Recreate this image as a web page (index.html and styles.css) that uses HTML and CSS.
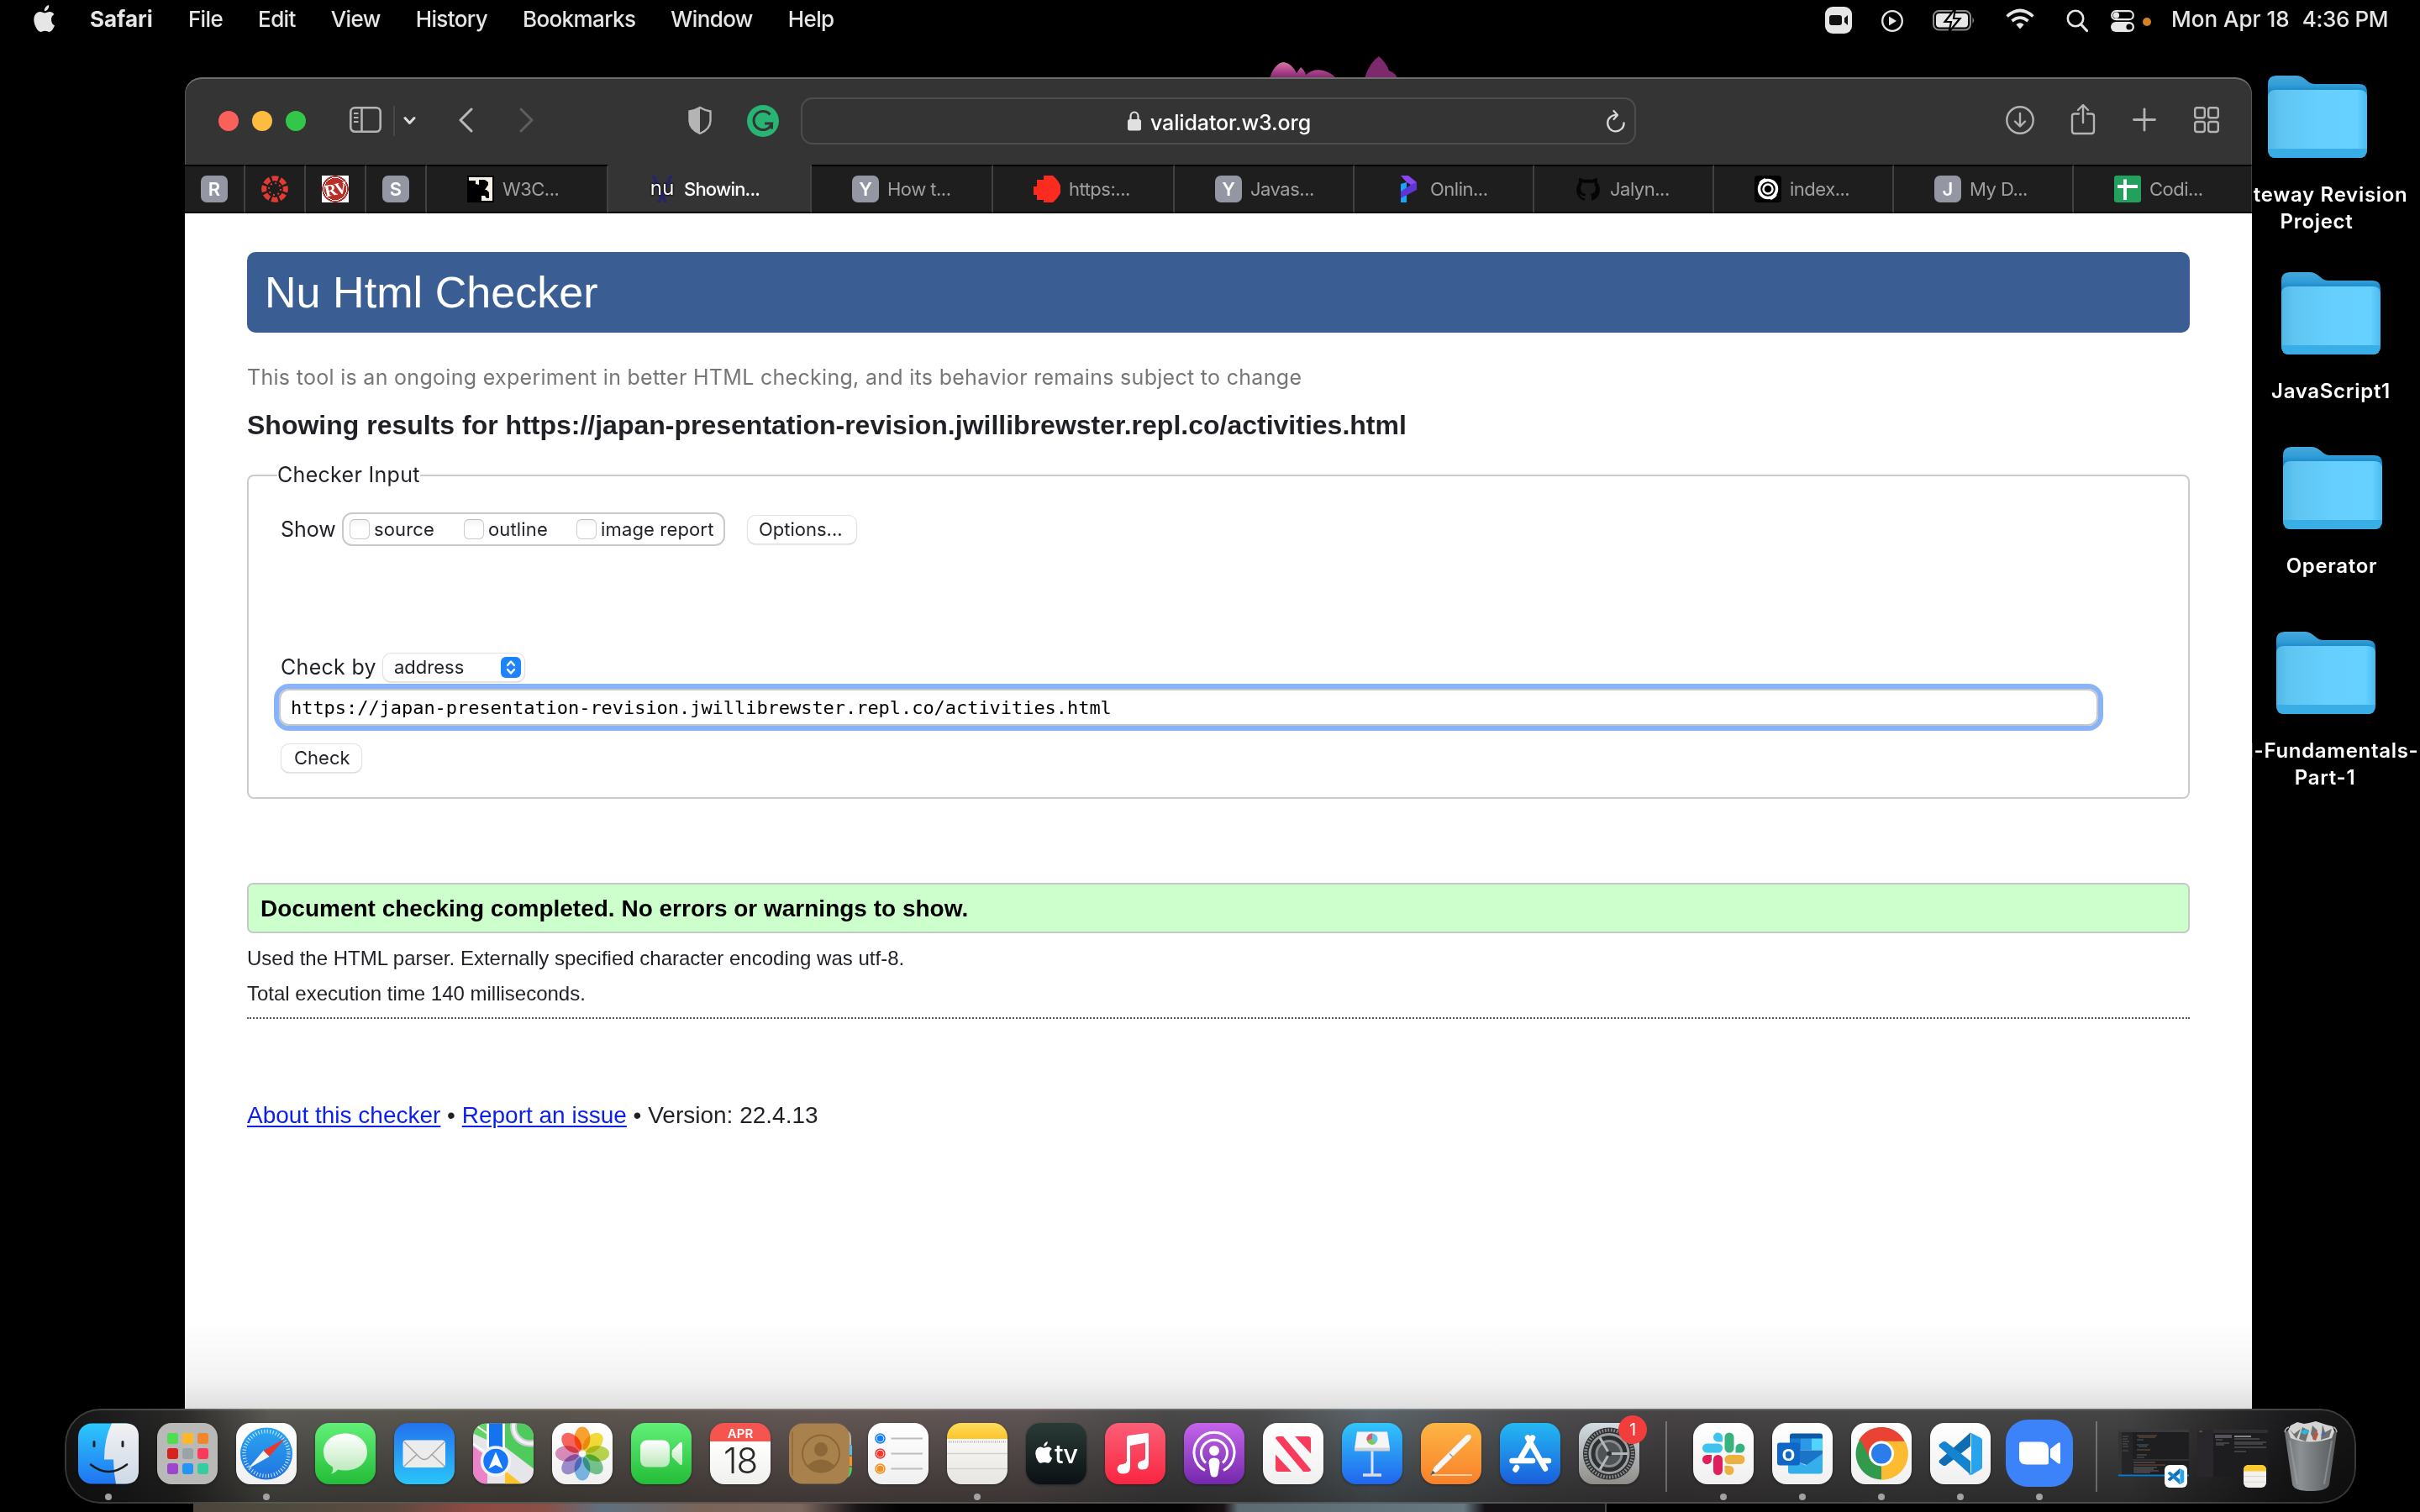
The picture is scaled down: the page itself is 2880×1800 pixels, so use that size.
FILE: index.html
```html
<!DOCTYPE html>
<html lang="en">
<head>
<meta charset="utf-8">
<title>Showing results - Nu Html Checker</title>
<link rel="stylesheet" href="styles.css">
</head>
<body>
<svg class="defs" width="0" height="0">
  <defs>
    <linearGradient id="fBack" x1="0" y1="0" x2="0" y2="1"><stop offset="0" stop-color="#46a9dc"/><stop offset=".2" stop-color="#2f9bd6"/><stop offset=".35" stop-color="#1180c4"/></linearGradient>
    <linearGradient id="fFront" x1="0" y1="0" x2="1" y2="0"><stop offset="0" stop-color="#4fb8e8"/><stop offset=".12" stop-color="#5fc4f0"/><stop offset=".5" stop-color="#66cffe"/><stop offset=".9" stop-color="#66d0ff"/><stop offset="1" stop-color="#48bbf0"/></linearGradient>
    <linearGradient id="gWhite" x1="0" y1="0" x2="0" y2="1"><stop offset="0" stop-color="#fff"/><stop offset="1" stop-color="#b9e8b9"/></linearGradient>
    <linearGradient id="gBlue" x1="0" y1="0" x2="0" y2="1"><stop offset="0" stop-color="#2dc8fb"/><stop offset="1" stop-color="#1f74f2"/></linearGradient>
    <linearGradient id="gFace" x1="0" y1="0" x2="0" y2="1"><stop offset="0" stop-color="#f1f1f4"/><stop offset="1" stop-color="#cdd9e6"/></linearGradient>
    <linearGradient id="gNeedle" x1="0" y1="0" x2="0" y2="1"><stop offset="0" stop-color="#2aa6f0"/><stop offset="1" stop-color="#2173e0"/></linearGradient>
    <linearGradient id="gBin" x1="0" y1="0" x2="1" y2="0"><stop offset="0" stop-color="#6a6e71"/><stop offset=".3" stop-color="#8d9194"/><stop offset=".6" stop-color="#73777a"/><stop offset="1" stop-color="#575b5e"/></linearGradient>
    <linearGradient id="gPetal" x1="0" y1="0" x2="0" y2="1"><stop offset="0" stop-color="#d976a4"/><stop offset=".6" stop-color="#a8408a"/><stop offset="1" stop-color="#7e2a6a"/></linearGradient>
    <symbol id="folder" viewBox="0 0 118 98">
      <path d="M0 10Q0 0 10 0H34Q39 0 44 4L49 8Q52 10 56 10H108Q118 10 118 19V60H0z" fill="url(#fBack)"/>
      <path d="M0 24Q1 17 9 17H109Q117 17 118 24V88Q118 98 108 98H10Q0 98 0 88z" fill="url(#fFront)"/>
      <path d="M0 88V87H118V88Q118 98 108 98H10Q0 98 0 88z" fill="#39ade6"/>
    </symbol>
    <symbol id="apple" viewBox="0 0 26 32">
      <path d="M18.2 0Q18.6 3 16.7 5.200Q15 7.400 12.800 7.200Q12.500 4.500 14.300 2.400Q16 .400 18.200 0zM25 24.500Q23.800 27.300 22.500 29.200Q20.700 31.800 18.600 31.900Q17.500 31.900 16.200 31.300Q14.900 30.700 13.500 30.700Q12.100 30.700 10.700 31.300Q9.400 31.900 8.500 31.900Q6.300 32 4.300 29.200Q.4 23.500 .3 17.600Q.3 12.800 3 10.100Q5 8.100 7.700 8.100Q9.100 8.100 10.800 8.800Q12.600 9.500 13.300 9.500Q13.900 9.500 15.900 8.700Q17.800 8 19.300 8.100Q22.500 8.300 24.500 11Q21 13.200 21 17Q21 22.300 25 24.500z" fill="currentColor"/>
    </symbol>
    <symbol id="vscode" viewBox="0 0 72 72">
      <path d="M48 11L11 44Q10 46 11 47L15 50Q17 51 19 50L48 27z" fill="#0f6db3"/>
      <path d="M48 61L11 28Q10 26 11 25L15 22Q17 21 19 22L48 45z" fill="#1484d0"/>
      <path d="M46 11Q48 11 50 12L60 17Q62 18 62 20V52Q62 54 60 55L50 61Q47 62 45 60Q49 61 49 57V15Q49 11 46 11z" fill="#2aa3ef"/>
    </symbol>
  </defs>
</svg>

<header class="menubar">
  <svg class="menubar-apple" width="26" height="32"><use href="#apple"/></svg>
  <nav class="menus"><b>Safari</b><span>File</span><span>Edit</span><span>View</span><span>History</span><span>Bookmarks</span><span>Window</span><span>Help</span></nav>
  <div class="status">
    <svg width="32" height="40"><rect y="8" width="32" height="32" rx="9" fill="#e6e6e6"/><rect x="5" y="18" width="15" height="12" rx="3" fill="#111"/><path d="M27 18v12l-4-3.500v-5z" fill="#111"/></svg>
    <svg class="s-play" width="26" height="40"><circle cx="13" cy="25" r="11.800" fill="none" stroke="#e6e6e6" stroke-width="2.300"/><path d="M9 19.500v11l9-5.500z" fill="#e6e6e6"/></svg>
    <svg class="s-bat" width="50" height="40"><rect x="1" y="13" width="44" height="22.500" rx="6.500" fill="none" stroke="#8a8a8a" stroke-width="2"/><rect x="4" y="16" width="38" height="16.500" rx="4" fill="#e6e6e6"/><path d="M47.500 20.500q3 3.500 0 7.500z" fill="#8a8a8a"/><path d="M27 10L14.500 26H22L19.500 38L32.500 22H25z" fill="#e6e6e6" stroke="#000" stroke-width="2.200"/></svg>
    <svg class="s-wifi" width="34" height="40" fill="none" stroke="#e6e6e6" stroke-width="3.600"><path d="M1.500 19.500Q17 5.500 32.500 19.500M7.500 25Q17 17 26.500 25"/><path d="M17 34.500l-4.600-5.300q4.600-3.800 9.200 0z" fill="#e6e6e6" stroke="none"/></svg>
    <svg class="s-search" width="26" height="40" fill="none" stroke="#e6e6e6" stroke-width="2.600"><circle cx="11" cy="22" r="9.200"/><path d="M17.500 29l7 7.500" stroke-width="3.200" stroke-linecap="round"/></svg>
    <svg class="s-cc" width="28" height="40"><rect x="1.200" y="13.200" width="25.600" height="10" rx="5" fill="none" stroke="#e6e6e6" stroke-width="2.200"/><circle cx="6.500" cy="18.200" r="3.600" fill="#e6e6e6"/><rect y="26" width="28" height="12" rx="6" fill="#e6e6e6"/><circle cx="22" cy="32" r="3.600" fill="#000"/></svg>
    <i class="mic"></i>
    <span class="clock"><span>Mon Apr 18</span><span>4:36 PM</span></span>
  </div>
</header>

<svg class="lotus" width="160" height="26"><path d="M0 26Q6 8 17 7Q27 9 32 20L37 13Q42 17 43 22Q52 14 64 17Q74 20 79 26z" fill="url(#gPetal)"/><path d="M113 26Q119 7 130 0Q139 8 142 17Q150 20 152 26z" fill="#7c2a6c"/></svg>
<div class="wallwin"></div>

<section class="folder f1"><svg width="118" height="98"><use href="#folder"/></svg><p>Gateway Revision<br>Project</p></section>
<section class="folder f2"><svg width="118" height="98"><use href="#folder"/></svg><p>JavaScript1</p></section>
<section class="folder f3"><svg width="118" height="98"><use href="#folder"/></svg><p>Operator</p></section>
<section class="folder f4"><svg width="118" height="98"><use href="#folder"/></svg><p><span>l-Fundamentals-</span><br>Part-1</p></section>

<div class="window">
  <div class="toolbar">
    <div class="lights"><i class="red"></i><i class="yellow"></i><i class="green"></i></div>
    <svg class="t-side" width="38" height="40" fill="none" stroke="#b4b4b4" stroke-width="2.600"><rect x="1.300" y="4.300" width="35.400" height="28.400" rx="5"/><path d="M14.500 4v29"/><path d="M5 11h5.500M5 16h5.500M5 21h5.500" stroke-width="2"/></svg>
    <i class="t-sep"></i>
    <svg class="t-chev" width="15" height="40" fill="none" stroke="#dcdcdc" stroke-width="3" stroke-linecap="round" stroke-linejoin="round"><path d="M2 16.500l5.500 6 5.500-6"/></svg>
    <svg class="t-back" width="17" height="40" fill="none" stroke="#b8b8b8" stroke-width="3" stroke-linecap="round" stroke-linejoin="round"><path d="M15 6L2 19l13 13"/></svg>
    <svg class="t-fwd" width="17" height="40" fill="none" stroke="#5e5e5e" stroke-width="3" stroke-linecap="round" stroke-linejoin="round"><path d="M2 6l13 13L2 32"/></svg>
    <svg class="t-shield" width="28" height="40"><path d="M14 4Q20 7.500 26.500 8.500V20Q26 30 14 35Q2 30 1.500 20V8.500Q8 7.500 14 4z" fill="none" stroke="#b4b4b4" stroke-width="2.400"/><path d="M14 3.500Q7 7.500 1 8V20Q2 30 14 35.500z" fill="#b4b4b4"/></svg>
    <svg class="t-gram" width="38" height="40"><circle cx="19" cy="20" r="19" fill="#28b473"/><path d="M27.500 12.500A11 11 0 1 0 29.500 23H21M29.500 23V29.500" fill="none" stroke="#343434" stroke-width="3"/></svg>
    <div class="url">
      <svg width="16" height="24"><rect y="10" width="16" height="13.500" rx="2.500" fill="#e0e0e0"/><path d="M3.500 11V6.500a4.500 5 0 0 1 9 0V11" fill="none" stroke="#e0e0e0" stroke-width="2.200"/></svg>
      <span>validator.w3.org</span>
      <svg class="reload" width="24" height="28" fill="none" stroke="#d8d8d8" stroke-width="2.300" stroke-linecap="round" stroke-linejoin="round"><path d="M13 7A9.700 9.700 0 1 0 21.600 16.500M9.500 2L14 7L9.500 12"/></svg>
    </div>
    <svg class="t-down" width="34" height="40" fill="none" stroke="#b4b4b4" stroke-width="2.400" stroke-linecap="round" stroke-linejoin="round"><circle cx="17" cy="19" r="15.700"/><path d="M17 11v15M11 20.500l6 6 6-6"/></svg>
    <svg class="t-share" width="30" height="40" fill="none" stroke="#b4b4b4" stroke-width="2.400" stroke-linecap="round" stroke-linejoin="round"><path d="M10 11.500H5Q2 11.500 2 14.500V31.500Q2 35 5 35H25Q28 35 28 31.500V14.500Q28 11.500 25 11.500H20M15 22V1.500M9 7l6-6 6 6"/></svg>
    <svg class="t-plus" width="28" height="40" fill="none" stroke="#b4b4b4" stroke-width="2.800" stroke-linecap="round"><path d="M14 6v25M1.500 18.500h25"/></svg>
    <svg class="t-grid" width="30" height="40" fill="none" stroke="#b4b4b4" stroke-width="2.400"><rect x="1.200" y="4.200" width="11.600" height="12" rx="2.500"/><rect x="17.200" y="4.200" width="11.600" height="12" rx="2.500"/><rect x="1.200" y="21" width="11.600" height="12" rx="2.500"/><rect x="17.200" y="21" width="11.600" height="12" rx="2.500"/></svg>
  </div>
  <div class="tabs">
    <div class="tab"><i class="letter">R</i></div>
    <div class="tab"><svg width="32" height="32" viewBox="-16 -16 32 32"><circle r="12.800" fill="none" stroke="#e23b34" stroke-width="6" stroke-dasharray="7.500 2.550" stroke-dashoffset="3.750"/><circle r="7" fill="none" stroke="#e23b34" stroke-width="2" stroke-dasharray="2 3.500"/></svg></div>
    <div class="tab"><i class="rv"><b>RV</b></i></div>
    <div class="tab"><i class="letter">S</i></div>
    <div class="tab"><svg width="32" height="32"><path d="M0 0h32v32H0z" fill="#000"/><path d="M2 2H30V30H17V24H21L23 27H26V20L23 17H21L25 11V8L21 5H14V11L10 10V6H2z" fill="#f5f1e6"/></svg><span>W3C...</span></div>
    <div class="tab active"><i class="nu">nu</i><span>Showin...</span></div>
    <div class="tab"><i class="letter">Y</i><span>How t...</span></div>
    <div class="tab"><svg width="32" height="32"><path d="M12 0H23L27 4L30 8L32 12V21L28 27L23 32H12V29H4V23H0V13H4V5H12z" fill="#fb2c1f"/></svg><span>https:...</span></div>
    <div class="tab"><i class="letter">Y</i><span>Javas...</span></div>
    <div class="tab"><svg width="32" height="32"><path d="M7 10L14 8V32H7z" fill="#1ba4f4"/><path d="M7 0H16L26 8V15L14 8z" fill="#8a46f5"/><path d="M26 8V17L7 27V19L19 11z" fill="#5b35d6"/></svg><span>Onlin...</span></div>
    <div class="tab"><svg width="32" height="32"><path d="M12 30Q2 27 2 16.500Q2 12 5 8.500V3Q8 3 11 5Q16 4 21 5Q24 3 27 3V8.500Q30 12 30 16.500Q30 27 20 30V25Q20 23 18.500 22Q25 21 25 15Q25 12 23.500 11V8L20.500 9Q16 8 11.500 9L8.500 8V11Q7 12 7 15Q7 21 13.500 22L12.500 24Q9 25 8 23L5.500 21.500Q8 27.500 12 27z" fill="#050505"/></svg><span>Jalyn...</span></div>
    <div class="tab"><svg width="32" height="32" fill="none" stroke="#fff"><rect width="32" height="32" rx="4" fill="#000" stroke="none"/><circle cx="16" cy="16" r="10.500" stroke-width="3.500"/><circle cx="16" cy="16" r="5.500" stroke-width="2.500"/><path d="M6 9q3-4 7-5M26 23q-3 4-7 5" stroke-width="2"/></svg><span>index...</span></div>
    <div class="tab"><i class="letter">J</i><span>My D...</span></div>
    <div class="tab"><svg width="32" height="32"><rect width="32" height="32" rx="3" fill="#22a05c"/><path d="M11 4.500h4v6.500h13v4H15v14h-4V15H4v-4h7z" fill="#fff"/></svg><span>Codi...</span></div>
  </div>

  <main class="page">
    <h1>Nu Html Checker</h1>
    <p class="tagline">This tool is an ongoing experiment in better HTML checking, and its behavior remains subject to change</p>
    <h2>Showing results for https://japan-presentation-revision.jwillibrewster.repl.co/activities.html</h2>
    <fieldset class="checker">
      <legend>Checker Input</legend>
      <div class="show">
        <span>Show</span>
        <div class="checks">
          <label><i></i>source</label><label><i></i>outline</label><label><i></i>image report</label>
        </div>
        <div class="button options">Options...</div>
      </div>
      <div class="by">
        <span>Check by</span>
        <div class="button select">address<svg width="24" height="25"><rect width="24" height="25" rx="6" fill="#1d84fb"/><path d="M8 10l4-4.500 4 4.500M8 15l4 4.500 4-4.500" fill="none" stroke="#fff" stroke-width="2.400" stroke-linecap="round" stroke-linejoin="round"/></svg></div>
      </div>
      <div class="address">https://japan-presentation-revision.jwillibrewster.repl.co/activities.html</div>
      <div class="button check">Check</div>
    </fieldset>
    <p class="success">Document checking completed. No errors or warnings to show.</p>
    <p class="details">Used the HTML parser. Externally specified character encoding was utf-8.</p>
    <p class="details last">Total execution time 140 milliseconds.</p>
    <footer><a>About this checker</a> • <a>Report an issue</a> • <span>Version: 22.4.13</span></footer>
  </main>
</div>

<div class="dock">
  <div class="apps">
    <div class="app run"><svg viewBox="0 0 72 72"><rect width="72" height="72" rx="16" fill="url(#gBlue)"/><path d="M40 0H56Q72 0 72 16V56Q72 72 56 72H45Q42 58 42 43H31Q31 18 40 0z" fill="url(#gFace)"/><path d="M19 22v5M53 22v5" stroke="#222" stroke-width="3" stroke-linecap="round"/><path d="M15 49Q36 66 58 49" fill="none" stroke="#1b1b1b" stroke-width="2.600" stroke-linecap="round"/></svg></div>
    <div class="app launch"><i></i><i></i><i></i><i></i><i></i><i></i><i></i><i></i><i></i></div>
    <div class="app run white"><svg viewBox="0 0 72 72"><circle cx="36" cy="36" r="31" fill="url(#gNeedle)"/><circle cx="36" cy="36" r="26.500" fill="none" stroke="#d7ecfc" stroke-width="4.500" stroke-dasharray="1 2.469"/><path d="M58 18L39.500 39.500L32.500 32.500z" fill="#e8382f"/><path d="M14 54L32.500 32.500L39.500 39.500z" fill="#f3f3f3"/></svg></div>
    <div class="app greenbg"><svg viewBox="0 0 72 72"><path d="M36 12C51 12 62 21 62 34S51 56 36 56Q31 56 27 55Q24 59 19 60Q22 56 21 52Q10 46 10 34C10 21 21 12 36 12z" fill="url(#gWhite)"/></svg></div>
    <div class="app mail"><svg viewBox="0 0 72 72"><rect x="10.500" y="20" width="50.500" height="32.500" rx="4" fill="#ececec"/><path d="M12 22L31 41Q36 45 41 41L60 22M12 51L27 37M60 51L45 37" fill="none" stroke="#a5a5a5" stroke-width="1.600"/></svg></div>
    <div class="app"><svg viewBox="0 0 72 72"><clipPath id="r"><rect width="72" height="72" rx="16"/></clipPath><g clip-path="url(#r)"><path d="M0 0h72v72H0z" fill="#e6e6ea"/><path d="M0 0h17v20L0 12z" fill="#62d466"/><path d="M38 0h34v54L38 28z" fill="#4ecb5c"/><path d="M0 27L17 40V72H0z" fill="#ec82c8"/><path d="M38 56L58 72H38z" fill="#fbc42c"/><path d="M17 12L0 0M0 24L20 38" stroke="#fff" stroke-width="2"/><path d="M19 0h16v34H19z" fill="#1673ee"/><path d="M17.500 0v34M36.500 0v34" stroke="#fff" stroke-width="2.500"/><circle cx="68" cy="4" r="20" fill="none" stroke="#c9cbd2" stroke-width="8"/><circle cx="68" cy="4" r="20" fill="none" stroke="#f1f1f4" stroke-width="4"/><circle cx="27" cy="45" r="16.500" fill="#1677fb" stroke="#f3f3f5" stroke-width="3.500"/><path d="M27 34L35.500 54L27 49.500L18.500 54z" fill="#fff"/></g></svg></div>
    <div class="app white"><svg viewBox="-36 -36 72 72" class="photos"><ellipse cy="-18" rx="9.500" ry="14" fill="#fb9a1e"/><ellipse cy="-18" rx="9.500" ry="14" fill="#f2dc28" transform="rotate(45)"/><ellipse cy="-18" rx="9.500" ry="14" fill="#b6d53f" transform="rotate(90)"/><ellipse cy="-18" rx="9.500" ry="14" fill="#6cc58a" transform="rotate(135)"/><ellipse cy="-18" rx="9.500" ry="14" fill="#73b7ea" transform="rotate(180)"/><ellipse cy="-18" rx="9.500" ry="14" fill="#9a88cf" transform="rotate(225)"/><ellipse cy="-18" rx="9.500" ry="14" fill="#d985b8" transform="rotate(270)"/><ellipse cy="-18" rx="9.500" ry="14" fill="#fb5a50" transform="rotate(315)"/></svg></div>
    <div class="app greenbg"><svg viewBox="0 0 72 72"><rect x="11" y="20" width="35" height="32" rx="8" fill="url(#gWhite)"/><path d="M49 32L58 23Q61 21 61 25V47Q61 51 58 49L49 40Q48 36 49 32z" fill="url(#gWhite)"/></svg></div>
    <div class="app cal"><b>APR</b><span>18</span></div>
    <div class="app contacts"><svg viewBox="0 0 75 72"><path d="M60 9h10q4 2 4 9v8H60z" fill="#b9b6ae"/><path d="M60 26h15v12H60z" fill="#56b9ea"/><path d="M60 39h15v12H60z" fill="#f7932a"/><path d="M60 52h15q0 8-4 12H60z" fill="#4fcf62"/><rect width="72" height="72" rx="16" fill="#a9814d"/><path d="M4 10V62" stroke="#8d693a" stroke-width="1.500"/><circle cx="38" cy="36" r="22" fill="none" stroke="#8a6638" stroke-width="2"/><ellipse cx="38" cy="31" rx="8" ry="8.500" fill="#8c6839"/><path d="M22 50Q38 36 54 50Q38 66 22 50z" fill="#8c6839"/></svg></div>
    <div class="app white"><svg viewBox="0 0 72 72" fill="none"><path d="M27.500 18H65M27.500 36H65M27.500 54H65" stroke="#bdbdbd" stroke-width="2"/><g stroke-width="1.500"><circle cx="14.500" cy="18" r="5.500" stroke="#157efb"/><circle cx="14.500" cy="36" r="5.500" stroke="#f9372f"/><circle cx="14.500" cy="54" r="5.500" stroke="#f88f1d"/></g><circle cx="14.500" cy="18" r="3.800" fill="#157efb"/><circle cx="14.500" cy="36" r="3.800" fill="#f9372f"/><circle cx="14.500" cy="54" r="3.800" fill="#f88f1d"/></svg></div>
    <div class="app run notes"><svg viewBox="0 0 72 72"><path d="M0 36h72M0 54h72" stroke="#d2d2d2" stroke-width="1.500"/><path d="M2 22h68" stroke="#a9a9a9" stroke-width="2" stroke-dasharray="1 1.500"/></svg></div>
    <div class="app tv"><svg width="21" height="26"><use href="#apple"/></svg><span>tv</span></div>
    <div class="app music"><svg viewBox="0 0 72 72"><path d="M26 17Q26 15 28 14.500L50 11.500Q52 11 52 13.500V47Q52 55 45 55Q39 55 39 50Q39 45.500 44 44.500Q48 44 48 41V23L30 26.500V52Q30 60 22 60Q15 60 14.500 54.500Q15 49 21 48.500Q26 48 26 44V17z" fill="#fff"/></svg></div>
    <div class="app podcast"><svg viewBox="0 0 72 72" fill="none" stroke="#fff" stroke-width="3"><path d="M25 56A24 24 0 1 1 47 56"/><path d="M26 47A15.500 15.500 0 1 1 46 47"/><circle cx="36" cy="32.500" r="6" fill="#fff" stroke="none"/><path d="M29.500 47Q29.500 41 36 41T42.500 47L40.500 60Q40 64 36 64T31.500 60z" fill="#fff" stroke="none"/></svg></div>
    <div class="app white"><svg viewBox="0 0 72 72" fill="#f83a5c"><path d="M15 18Q15 15.500 18 15.500H24L57 55Q57 57 54 57.500H48L15 18z"/><path d="M38 15.500H54Q57 15.500 57 19V36z"/><path d="M34 57.500H18Q15 57.500 15 54V37z"/></svg></div>
    <div class="app keynote"><svg viewBox="0 0 72 72"><path d="M18 10H54L57 30H15z" fill="#f5f5f7"/><path d="M15 29H57V33H15z" fill="#cfd3da"/><path d="M36 33V61" stroke="#e1e5ea" stroke-width="3"/><path d="M25 61.500H47" stroke="#d9dde2" stroke-width="3.500"/><circle cx="36" cy="18.500" r="6.500" fill="#57c7ee"/><path d="M36 18.500V12A6.500 6.500 0 0 0 30 21z" fill="#e8556e"/><path d="M36 18.500L30 21A6.500 6.500 0 0 0 40 24z" fill="#7ec64c"/></svg></div>
    <div class="app pages"><svg viewBox="0 0 72 72"><path d="M13 61.500H61" stroke="#ffd0a1" stroke-width="2"/><path d="M11 62L16 52L53 15Q57 12 59 14T58 20L20 57z" fill="#f6f6f6"/><path d="M34 36l4 4" stroke="#999" stroke-width="1.500"/><path d="M11 62l3-6 3 3z" fill="#555"/></svg></div>
    <div class="app store"><svg viewBox="0 0 72 72" fill="none" stroke="#fff" stroke-width="6.500" stroke-linecap="round"><path d="M39 17L24.500 42M33 17L54 54M14.500 44.500H39M52 44.500H58M20 52.500L18.500 55"/></svg></div>
    <div class="app settings"><svg viewBox="0 0 72 72" fill="none"><circle cx="36" cy="36" r="31" fill="#2d2f31"/><circle cx="36" cy="36" r="28" stroke="#8d9092" stroke-width="4" stroke-dasharray="1.700 1.818"/><circle cx="36" cy="36" r="23" stroke="#9da0a2" stroke-width="3"/><circle cx="36" cy="36" r="15" fill="#505356" stroke="#8a8d90" stroke-width="3"/><path d="M36 36H58M36 36L25 17M36 36L25 55" stroke="#b5b8ba" stroke-width="3"/><circle cx="36" cy="36" r="3" fill="#333"/></svg><em>1</em></div>
  </div>
  <i class="divider"></i>
  <div class="apps">
    <div class="app run white"><svg viewBox="0 0 72 72"><g fill="#3ec3ee"><rect x="11" y="24" width="24" height="11" rx="5.500"/><path d="M35 22h-6a5.500 5.500 0 1 1 6-5.500z"/></g><g fill="#36b37e"><rect x="37.500" y="11" width="11" height="24" rx="5.500"/><path d="M50.500 35v-5.500a5.500 5.500 0 1 1 5.500 5.500z"/></g><g fill="#ecb140"><rect x="37.500" y="37.500" width="24" height="11" rx="5.500"/><path d="M37.500 50.500h5.500a5.500 5.500 0 1 1-5.500 5.500z"/></g><g fill="#e0205d"><rect x="24" y="37.500" width="11" height="24" rx="5.500"/><path d="M22 37.500v5.500a5.500 5.500 0 1 1-5.500-5.500z"/></g></svg></div>
    <div class="app run white outlook"><svg viewBox="0 0 72 72"><path d="M21 15Q21 12 24 12H57Q60 12 60 15V24H21z" fill="#0f5aa6"/><path d="M21 18h13v14H21z" fill="#1a7bd2"/><path d="M34 18h13v14H34z" fill="#2b9ae6"/><path d="M47 18h13v14H47z" fill="#4fd4fc"/><path d="M21 32h39v10L42 50L21 42z" fill="#1c74c6"/><path d="M19 40L40 50L60 36V57Q60 60 57 60H22Q19 60 19 57z" fill="#35aeec"/><rect x="6" y="23" width="27" height="27" rx="3" fill="#0f67c8"/></svg><b>O</b></div>
    <div class="app run white"><svg viewBox="-36 -36 72 72"><path d="M0 0L-27 -15.500A31 31 0 0 1 28 -14z" fill="#e84335"/><path d="M0 0L28 -15A31 31 0 0 1 0 31z" fill="#fbbc32"/><path d="M0 0L0 31A31 31 0 0 1 -26 -16z" fill="#319a4c"/><path d="M0 -15H27.500A31 31 0 0 1 0 31L13 8z" fill="#fbbc32"/><path d="M0 -15H27.500A31 31 0 0 0 -25.500 -17.500L-13 7z" fill="#e84335"/><circle r="15" fill="#fff"/><circle r="12" fill="#2b7de9"/></svg></div>
    <div class="app run white"><svg><use href="#vscode"/></svg></div>
    <div class="app run"><svg class="zoomapp" viewBox="0 0 80 80"><rect width="80" height="80" rx="26" fill="#3c82f8"/><path d="M16 29Q16 26.500 18.500 26.500H42Q51 26.500 51 35V51Q51 53.500 48.500 53.500H25Q16 53.500 16 46z" fill="#fff"/><path d="M53 35L62 28Q65 26 65 29V51Q65 54 62 52L53 45z" fill="#fff"/></svg></div>
  </div>
  <i class="divider"></i>
  <div class="minis">
    <div class="mini"><svg width="84" height="56"><path d="M0 0h84v56H0z" fill="#1e1e20"/><path d="M0 0h84v3H0z" fill="#3a3a3c"/><path d="M0 3h4v52H0z" fill="#343436"/><path d="M4 3h13v52H4z" fill="#252527"/><path d="M17 36h67" stroke="#444"/><g stroke-width="1"><path d="M5 8h7M5 11h6M5 14h8M5 17h6M5 20h7M5 25h7" stroke="#555"/><path d="M22 7h24M24 9h20M22 24h16M22 30h12" stroke="#6c5640"/><path d="M22 12h8M22 18h14M24 20h10M22 33h9" stroke="#465c70"/><path d="M18 39h26M18 45h28M18 47h24M18 49h30M18 51h20" stroke="#666"/><path d="M18 42h38" stroke="#844"/></g><path d="M0 54.500h84" stroke="#0a7bd2" stroke-width="2"/></svg><svg class="badge" width="27" height="27" viewBox="0 0 72 72"><rect width="72" height="72" rx="16" fill="#fff"/><use href="#vscode"/></svg></div>
    <div class="mini"><svg width="84" height="56"><path d="M0 0h84v56H0z" fill="#1d1c1f"/><path d="M0 0h19v56H0z" fill="#29272c"/><path d="M19 0h65v4H19z" fill="#302e32"/><path d="M21 6h20v4H21z" fill="#565458"/><path d="M2 2h4" stroke="#8a7750"/><path d="M44 8h20" stroke="#ccc" stroke-width="1.200"/><path d="M44 11h30M44 15h38M44 17h34M44 21h38M44 26h14M22 12h8M22 16h16M22 18h10" stroke="#666"/></svg><svg class="badge" width="27" height="27" viewBox="0 0 72 72"><rect width="72" height="72" rx="16" fill="#f2f1ee"/><path d="M0 20V16Q0 0 16 0H56Q72 0 72 16V20z" fill="#fcc92f"/><path d="M0 36h72M0 54h72" stroke="#ccc" stroke-width="2"/></svg></div>
  </div>
  <svg class="trash" width="64" height="84"><path d="M1 14L10 76Q12 84 32 84T54 76L63 14Q32 -2 1 14z" fill="url(#gBin)"/><path d="M5 12L8 6L16 2L24 4L30 3L38 1L44 3L50 5L58 7L60 13L57 21Q32 30 8 21z" fill="#d4d4d4"/><path d="M6 10l6 6 8-6-5 12zM22 8l8 4-4 13-8-3zM34 6l6 6-4 12-4-8zM46 5l3 9 8-4-3 10-10 3z" fill="#707070"/><path d="M19 14l7-4 4 4-5 3z" fill="#29b9d9"/><path d="M34 22l4-10 3 4-3 8z" fill="#b9563c"/><path d="M44 18l3-5 3 4z" fill="#3c6eb9"/><path d="M1 14Q2 9 6 8M63 14Q62 9 59 8" fill="none" stroke="#aeb2b4" stroke-width="1.500"/><path d="M7 24L16 76M57 24L48 76" stroke="#a6aaad" stroke-width="2" opacity=".5"/></svg>
</div>
</body>
</html>
```
FILE: styles.css
```css
* { box-sizing: border-box; }
body {
  margin: 0; width: 2880px; height: 1800px; position: relative; overflow: hidden;
  background: #000; color: #1f2126; font-family: Inter, "Liberation Sans", sans-serif;
}
h1, h2, p, fieldset { margin: 0; }
i, em { font-style: normal; }
svg { display: block; flex: none; }
.defs { position: absolute; }

/* menu bar */
.menubar { display: flex; align-items: flex-start; height: 46px; padding: 0 38px 0 40px; color: #e6e6e6; font-size: 26px; font-weight: 500; line-height: 46px; white-space: nowrap; }
.menubar-apple { margin-top: 6px; }
.menus { display: flex; gap: 42px; margin-left: 41px; letter-spacing: -.62px; }
.menus b { letter-spacing: 0; font-weight: 700; }
.status { display: flex; margin-left: auto; }
.s-play, .s-bat { margin-left: 35px; }
.s-wifi { margin-left: 37px; }
.s-search { margin-left: 38px; }
.s-cc { margin-left: 27px; }
.mic { width: 10px; height: 10px; margin: 21px 0 0 10px; border-radius: 50%; background: #d08324; }
.clock { display: flex; justify-content: space-between; width: 258px; margin-left: 24px; }
.clock span:last-child { letter-spacing: -.4px; }

/* desktop */
.lotus { position: absolute; left: 1511px; top: 67px; }
.wallwin { position: absolute; left: 230px; top: 1690px; width: 1682px; height: 110px; border-right: 2px solid #444;
  background: linear-gradient(90deg, #4d453c 0, #4f4a3e 6%, #5d4a40 14%, #8e4a42 20%, #8a5048 25%, #5e7080 29%, #7a6458 36%, #7d6860 43%, #1a1618 47%, #030303 50%, #030303 70%, #1a1216 73%, #5c6b72 74%, #677880 90%, #151216 91.500%, #121114 100%); }
.folder { position: absolute; width: 260px; text-align: center; color: #fff; font-size: 24px; font-weight: 600; line-height: 32px; letter-spacing: .7px; white-space: nowrap; }
.folder svg { margin: 0 auto; }
.folder p { margin-top: 28px; }
.f1 { left: 2628px; top: 90px; }
.f1 p { transform: translateX(-1px); }
.f2 { left: 2644px; top: 324px; }
.f3 { left: 2646px; top: 532px; }
.f3 p { transform: translateX(-1px); }
.f4 { left: 2638px; top: 752px; }
.f4 p { transform: translateX(-1px); }
.f4 span { padding-left: 20px; }

/* browser window */
.window { position: absolute; left: 220px; top: 92px; width: 2460px; height: 1708px; border-radius: 20px 20px 0 0; background: #343434; overflow: hidden; clip-path: inset(0 0 110px 0); }
.toolbar { display: flex; align-items: center; height: 104px; padding-left: 40px; border-radius: 20px 20px 0 0; box-shadow: inset 0 2px 0 #6e6e6e, inset 1px 0 0 #555, inset -1px 0 0 #555; }
.lights { display: flex; gap: 16px; }
.lights i { width: 24px; height: 24px; border-radius: 50%; }
.red { background: #fc605b; }
.yellow { background: #fdbc40; }
.green { background: #34c648; }
.t-side { margin-left: 52px; }
.t-sep { width: 2px; height: 36px; margin-left: 14px; background: #484848; }
.t-chev { margin-left: 10px; }
.t-back { margin-left: 51px; }
.t-fwd { margin-left: 55px; }
.t-shield { margin-left: 184px; }
.t-gram { margin-left: 42px; }
.url { display: flex; align-items: center; width: 994px; height: 56px; margin-left: 26px; padding: 0 10px 0 387px; border: 2px solid #4d4d4d; border-radius: 14px; color: #fff; font-size: 25px; font-weight: 500; letter-spacing: -.12px; }
.url span { margin-left: 11px; line-height: 56px; padding-top: 3px; }
.reload { margin-left: auto; }
.t-down { margin-left: 440px; }
.t-share { margin-left: 43px; }
.t-plus { margin-left: 44px; }
.t-grid { margin-left: 45px; }

.tabs { display: grid; grid-template-columns: 72px 72px 72px 72px 216px 242px 216px 216px 214px 214px 214px 214px 214px 212px; height: 58px; background: #1e1e1e; }
.tab { display: flex; align-items: center; gap: 10px; padding-left: 48px; border-top: 2px solid #000; border-bottom: 2px solid #000; border-right: 2px solid #424242; color: #a0a0a0; font-size: 22px; letter-spacing: -.5px; white-space: nowrap; }
.tab:nth-child(-n+4) { padding-left: 19px; }
.tab:last-child { border-right-width: 1px; }
.active { background: #343434; border-top-color: #343434; color: #fff; font-weight: 500; letter-spacing: -.8px; }
.letter { width: 32px; height: 32px; border-radius: 7px; background: #9496a3; color: #fff; font: 600 22px/32px Inter, sans-serif; text-align: center; letter-spacing: 0; }
.rv { width: 32px; height: 32px; overflow: hidden; background: radial-gradient(circle, #b92f28 0 13px, #fff 13px 14px, #b92f28 14px 15.5px, #fff 16px); text-align: center; }
.rv b { display: block; margin: 0 -4px; color: #fff; font: 700 20px/32px "Liberation Serif", serif; letter-spacing: -1px; transform: rotate(-12deg); }
.nu { width: 32px; height: 32px; background: linear-gradient(65deg, transparent 38%, #26246b 39% 47%, transparent 48%), linear-gradient(-65deg, transparent 38%, #26246b 39% 47%, transparent 48%); color: #fff; font: 500 23px/31px "DejaVu Sans", sans-serif; text-align: center; letter-spacing: 0; text-shadow: 0 0 2px #000, 0 0 3px #000; }

/* page */
.page { height: 1546px; padding: 46px 74px 0; background: linear-gradient(#fff 0, #fff 1320px, #f3f3f3 1386px, #dedede 1424px, #dedede 100%); }
h1 { height: 96px; padding-left: 21px; border-radius: 10px; background: #3a5e93; color: #fff; font: 400 52px/96px "Liberation Sans", sans-serif; letter-spacing: .05px; }
.tagline { margin-top: 33px; color: #767676; font-size: 25px; line-height: 40px; letter-spacing: .295px; }
h2 { margin-top: 17px; font: 700 32px/40px "Liberation Sans", sans-serif; }
.checker { height: 401px; margin-top: 24px; padding: 0 0 0 38px; border: 2px solid #ccc; border-radius: 8px; font-size: 25px; }
.checker legend { margin-left: -4px; padding: 0; line-height: 31px; letter-spacing: .3px; }
.show, .by { display: flex; align-items: center; line-height: 40px; }
.show { height: 40px; margin-top: 29px; }
.by { height: 34px; margin-top: 127px; }
.show > span { width: 73px; }
.by > span { width: 122px; letter-spacing: .3px; line-height: 34px; }
.checks { display: flex; align-items: center; height: 40px; width: 456px; border: 2px solid #c9c9c9; border-radius: 12px; padding-left: 7px; font-size: 22px; letter-spacing: .15px; }
.checks label { display: flex; align-items: center; width: 136px; }
.checks label:nth-child(2) { width: 134px; }
.checks label:last-child { width: auto; white-space: nowrap; }
.checks i { width: 24px; height: 24px; margin-right: 5px; border-radius: 6px; border: 1px solid #ccc; border-top-color: #bbb; background: linear-gradient(#f4f4f4, #fff 40%); }
.button { height: 33px; border-radius: 9px; background: #fff; box-shadow: 0 0 0 1px #e2e2e2, 0 1px 2px #aaa; font-size: 22px; line-height: 33px; white-space: nowrap; }
.options { width: 129px; margin-left: 27px; padding-left: 13px; }
.select { display: flex; align-items: center; justify-content: space-between; width: 168px; padding: 0 4px 0 13px; }
.address { width: 2165px; height: 44px; margin: 9px 0 0 -2px; padding-left: 12px; border: 2px solid #c8c8c8; border-radius: 12px; box-shadow: 0 0 0 6px #89b3f8; color: #000; font: 22px/41px "DejaVu Sans Mono", monospace; letter-spacing: -.045px; }
.check { width: 95px; margin: 22px 0 0 1px; padding-left: 15px; }
.success { height: 60px; margin-top: 100px; padding-left: 14px; border: 2px solid #c8c8c8; border-radius: 7px; background: #cfc; color: #000; font: 700 28px/57px "Liberation Sans", sans-serif; }
.details { margin-top: 9px; font: 24px/42px "Liberation Sans", sans-serif; }
.last { margin-top: 0; height: 51px; border-bottom: 2px dotted #555; }
footer { margin-top: 95px; font: 28px/40px "Liberation Sans", sans-serif; }
footer a { color: #0a1eee; text-decoration: underline; text-decoration-thickness: 2px; text-underline-offset: 3px; }

/* dock */
.dock { position: absolute; left: 77px; top: 1677px; width: 2727px; height: 113px; display: flex; align-items: flex-start; padding: 17px 0 0 16px; border-radius: 42px; box-shadow: inset 0 0 0 2px rgba(255,255,255,.17);
  background: linear-gradient(transparent, rgba(0,0,0,.4)), linear-gradient(90deg, #151516 0, #2b2a29 5%, #5b5a54 9%, #5a554e 20%, #655856 33%, #605655 42%, #4b4a4b 48%, #4c4b4c 52%, #5d666b 57%, #4f4e50 64%, #484446 70%, #484848 80%, #454545 90%, #1c1c1e 97%, #151516 100%); }
.apps { display: flex; gap: 22px; }
.app { position: relative; width: 72px; height: 73px; border-radius: 17px; box-shadow: 0 1px 3px rgba(0,0,0,.4); }
.app > svg { width: 72px; height: 73px; }
.run::after { content: ""; position: absolute; left: 32px; top: 84px; width: 8px; height: 8px; border-radius: 50%; background: #a2a2a2; }
.white { background: linear-gradient(#fff, #f0f0f0); }
.greenbg { background: linear-gradient(#62f078, #23bd38); }
.launch { display: grid; grid-template-columns: repeat(3, 13px); grid-auto-rows: 13px; gap: 5px; place-content: center; background: #b9b9b7; }
.launch i { border-radius: 3px; background: #4fdd52; }
.launch i:nth-child(2) { background: #fcb828; }
.launch i:nth-child(3) { background: #f5852b; }
.launch i:nth-child(4) { background: #d8221e; }
.launch i:nth-child(5) { background: #9aa3a8; }
.launch i:nth-child(6) { background: #fb3a5c; }
.launch i:nth-child(7) { background: #9c45cd; }
.launch i:nth-child(8) { background: #2495f7; }
.launch i:nth-child(9) { background: #37cba0; }
.mail { background: linear-gradient(#2372ed, #2ac5fa); }
.photos ellipse { mix-blend-mode: multiply; opacity: .92; }
.cal { background: linear-gradient(#f6554f 0 22px, #fff 22px, #f0f0ee); text-align: center; overflow: hidden; }
.cal b { display: block; height: 23px; color: #fff; font: 600 15px/25px Inter, sans-serif; }
.cal span { display: block; color: #2a2a2a; font: 300 42px/44px Inter, sans-serif; letter-spacing: -1px; }
.contacts > svg { width: 75px; }
.contacts { box-shadow: none; }
.notes { background: linear-gradient(#fddc5e, #fcc52c 19px, #f8f8f7 19px, #e7e5e0); }
.tv { display: flex; align-items: center; justify-content: center; background: linear-gradient(#2a3b36, #0b1014); color: #fff; font: 500 31px/70px Inter, sans-serif; letter-spacing: -1px; }
.tv > svg { width: 21px; height: 26px; margin: -4px 2px 0 0; }
.music { background: linear-gradient(#fb5f77, #fa2540); }
.podcast { background: linear-gradient(#c465ea, #7428ad); }
.keynote { background: linear-gradient(#33c5fb, #2065ee); }
.pages { background: linear-gradient(#fdb544, #f9802a); }
.store { background: linear-gradient(#24b8f3, #1a5edc); }
.settings { background: linear-gradient(#d3dde3, #8f8d89); }
.settings em { position: absolute; left: 47px; top: -9px; width: 34px; height: 34px; border-radius: 50%; background: #f23d3d; color: #fff; font: 400 20px/34px Inter, sans-serif; text-align: center; }
.outlook b { position: absolute; left: 6px; top: 24px; width: 27px; color: #fff; font: 700 20px/27px "Open Sans", sans-serif; text-align: center; }
.app .zoomapp { position: relative; left: -4px; top: -4px; width: 80px; height: 80px; }
.app:has(.zoomapp) { box-shadow: none; }
.divider { width: 2px; height: 84px; margin: -2px 31px 0; background: rgba(255,255,255,.28); }
.divider + .minis { margin-left: -6px; }
.minis { display: flex; gap: 10px; margin-top: 8px; }
.mini { position: relative; }
.badge { position: absolute; left: 55px; top: 42px; }
.trash { margin: -3px 0 0 19px; }
```
